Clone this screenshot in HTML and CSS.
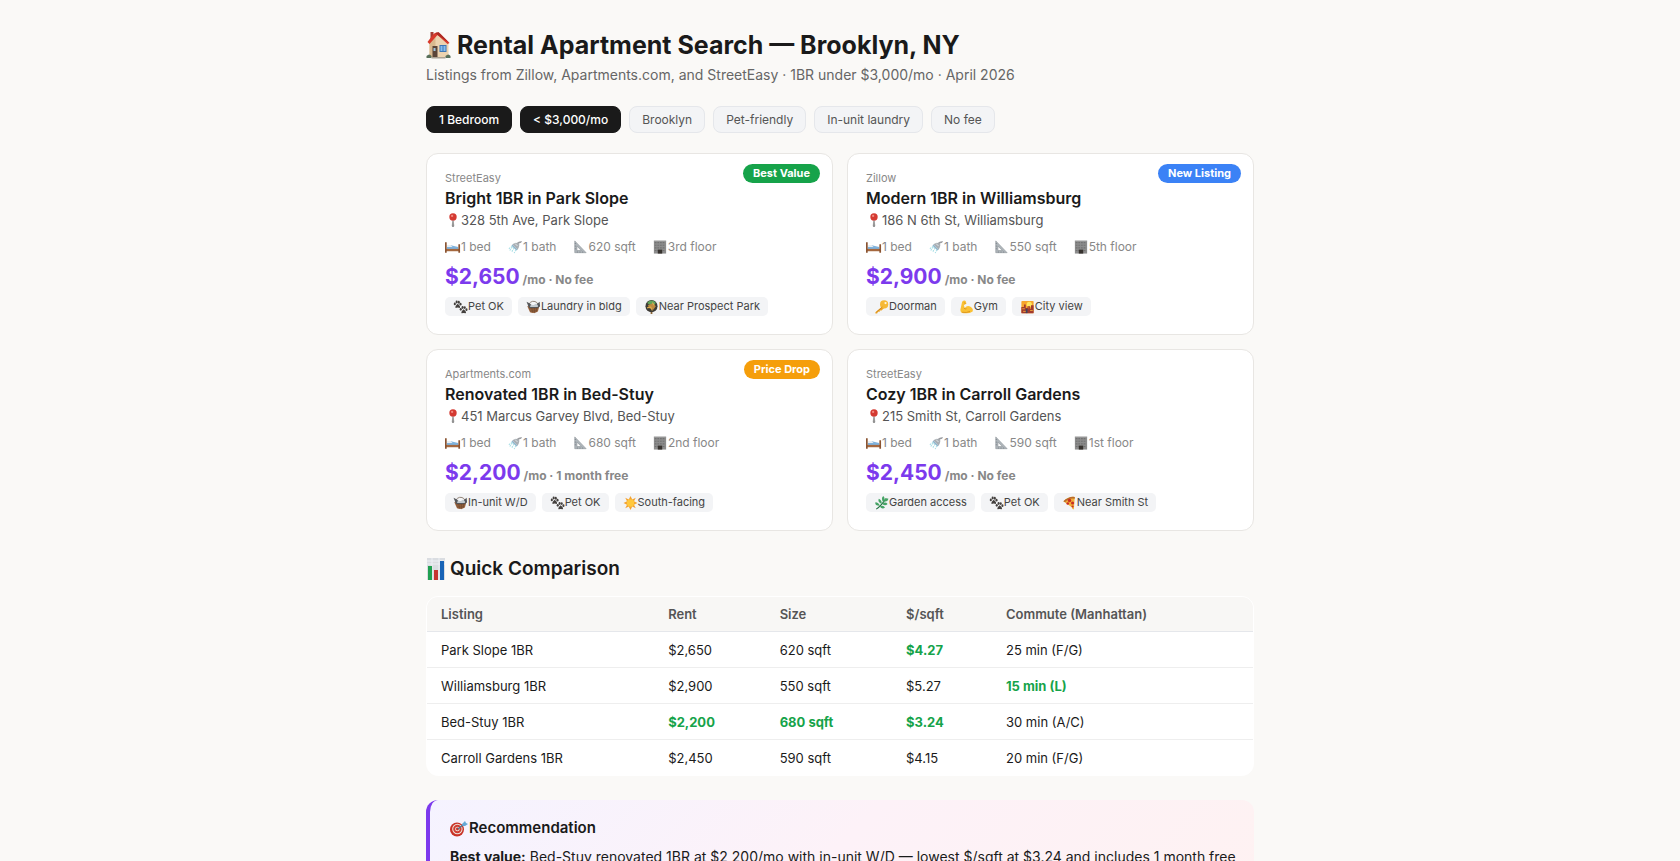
FILE: index.html
```html
<!DOCTYPE html>
<html lang="en">
<head>
  <meta charset="UTF-8" />
  <meta name="viewport" content="width=device-width, initial-scale=1.0"/>
  <title>Rental Apartment Search — Brooklyn, NY</title>
  <link rel="stylesheet" href="styles.css">
</head>
<body>
  <!-- ICONS -->
  <svg class="sprite" aria-hidden="true">
    <symbol id="house" viewBox="0 0 24 28">
      <rect x="4" y="1" width="3" height="8" fill="#a43b32"/>
      <path d="M3 11L12 3L22 12V26H3Z" fill="#ecd3b0"/>
      <path d="M3 11L9 6V26H3Z" fill="#d9b98f"/>
      <path d="M1 11L7 3Q10 0 14 3L23 12L21 13L11 4L3 13Z" fill="#d8392b"/>
      <path d="M9 2L12 1L22 11L23 12L11 4Z" fill="#ad2a23"/>
      <rect x="6" y="15" width="5" height="11" fill="#5b4539"/>
      <rect x="7" y="17" width="2" height="3" fill="#9fc6df"/>
      <rect x="13" y="14" width="7" height="7" fill="#3c76b5"/>
      <path d="M14 15H16V20H14ZM17 15H19V20H17Z" fill="#84bdf0"/>
      <path d="M0 25Q3 22 5 25V27H0ZM19 25Q22 22 24 25V27H19Z" fill="#58705a"/>
      <rect x="5" y="26" width="14" height="1.5" fill="#aaa294"/>
    </symbol>
    <symbol id="pin" viewBox="0 0 16 16">
      <path d="M8 7L9 15L8 16L7 15Z" fill="#858585" stroke="#777" stroke-width=".6"/>
      <circle cx="8" cy="4.5" r="4.2" fill="#d43a32"/>
      <circle cx="7" cy="3.3" r="1.3" fill="#f18a80"/>
    </symbol>
    <symbol id="bed" viewBox="0 0 17 14">
      <path d="M2 6L5 5L14 7V9H2Z" fill="#7fb2dc"/>
      <path d="M2 5H6L8 7H2Z" fill="#e9eef2"/>
      <path d="M1 9H15V11.5H1Z" fill="#a5683f"/>
      <path d="M0 2H1.8V13H0ZM14.2 4H16V13H14.2Z" fill="#8a5432"/>
    </symbol>
    <symbol id="shower" viewBox="0 0 16 16">
      <path d="M9 4Q12 1 16 1L15 3Q12 3 11 6Z" fill="#9a9ca0"/>
      <path d="M5 5Q9 1 13 5Q13 8 11 11Z" fill="#a9afb4"/>
      <path d="M5 5L11 11L9.5 12L4 6.5Z" fill="#8fb3cc"/>
      <path d="M5 8L2 12M7 9L4 14M9 11L7 15M5 7L1 10" stroke="#a9dfe6" stroke-width="1.2" stroke-dasharray="2 1"/>
      <path d="M8 4L11 7" stroke="#e8ecef"/>
    </symbol>
    <symbol id="ruler" viewBox="0 0 16 16">
      <path d="M2 1L15 14.5H2ZM4.5 7V12H9.5Z" fill="#aeb5ba" fill-rule="evenodd" stroke="#8d9499" stroke-width=".7"/>
      <path d="M2 4H3.5M2 7H3.5M2 10H3.5M5 14.5V13M8 14.5V13M11 14.5V13" stroke="#687078" stroke-width=".6"/>
    </symbol>
    <symbol id="building" viewBox="0 0 16 16">
      <rect x="1" y="1" width="14" height="14.5" fill="#8c8c8c"/>
      <path d="M2 3H14M2 6H14M2 9H14M2 12H14" stroke="#727272" stroke-width="1.3" stroke-dasharray="2 1"/>
      <rect x="5.5" y="11" width="5" height="4.5" fill="#37332f"/>
      <path d="M1 1H15" stroke="#aaa"/>
    </symbol>
    <symbol id="paws" viewBox="0 0 16 16">
      <g id="paw" fill="#44403e">
        <ellipse cx="1.5" cy="4.5" rx="1.2" ry="1.6"/>
        <ellipse cx="3.6" cy="2.4" rx="1.2" ry="1.7"/>
        <ellipse cx="6" cy="2.5" rx="1.2" ry="1.7"/>
        <ellipse cx="8" cy="4.8" rx="1.2" ry="1.6"/>
        <path d="M4.8 4.3Q8.4 7 7.2 9Q4.8 8.1 2.4 9Q1.4 7 4.8 4.3Z"/>
      </g>
      <use href="#paw" x="6.8" y="6.2"/>
    </symbol>
    <symbol id="basket" viewBox="0 0 16 16">
      <path d="M2 8Q2 3 7 1.5Q13 1 14 8" fill="none" stroke="#857566" stroke-width="1"/>
      <path d="M1 7L15 6L13 13Q8 16 4 14Z" fill="#9a643e"/>
      <path d="M0 2L4 4L6 6L9 7L15 2L15.5 7L13 9H3Z" fill="#55575b"/>
      <path d="M5 5L8 6L11 4L13 6V8H4Z" fill="#c3cacf"/>
      <path d="M3 10H13M4 12.5H12M6 9L7 14M9 9V15M12 8L11 13" stroke="#6a462f" stroke-width=".7"/>
    </symbol>
    <symbol id="park" viewBox="0 0 16 16">
      <path d="M8 12V16" stroke="#8d6534" stroke-width="2"/>
      <circle cx="8" cy="7" r="6.9" fill="#3e3c37"/>
      <path d="M3 3Q8-2 13 3L11 6Q8 4 5 5Z" fill="#61a35a"/>
      <path d="M4 6Q9 2 13 7L10 11L5 9Z" fill="#bd8b40"/>
      <path d="M3 9L7 8L9 12M9 3L11 6" stroke="#e1ae4c" stroke-width="1.2" fill="none"/>
    </symbol>
    <symbol id="key" viewBox="0 0 16 16">
      <path d="M9 7L1 14V15.5H3L4 13.5H6L6 12H8L11 9" fill="#eda527"/>
      <circle cx="11" cy="5" r="4.7" fill="#f6b936"/>
      <circle cx="12.6" cy="3.5" r="1.3" fill="#fff5dc"/>
      <path d="M2 14L9 8" stroke="#bd7617" stroke-width=".7"/>
    </symbol>
    <symbol id="arm" viewBox="0 0 16 16">
      <path d="M3 2Q5 0 7 1L8 4L5 6L6 9Q9 5 13 8Q16 10 15 13Q11 16 5 15Q1 15 1 11Z" fill="#fac135"/>
      <path d="M5 3L7 4M5 9Q6 11 8 10M3 14Q8 15 12 13" stroke="#d58c1b" stroke-width=".9" fill="none"/>
    </symbol>
    <symbol id="city" viewBox="0 0 16 16">
      <rect x="1" y="1" width="14" height="14" rx="1" fill="#f7a52c"/>
      <circle cx="10" cy="5" r="3" fill="#ffe55e"/>
      <path d="M1 8H4V5H6V9H8V7H11V10H12V6H15V15H1Z" fill="#a33a2e"/>
      <path d="M2 10H5M9 9H10M3 13H7M11 12H14" stroke="#f1aa3d" stroke-width="1"/>
      <path d="M6 10H8V15H6Z" fill="#41445c"/>
    </symbol>
    <symbol id="sun" viewBox="0 0 16 16">
      <path d="M8 0L10 4L14 2L12 6L16 8L12 10L14 14L10 12L8 16L6 12L2 14L4 10L0 8L4 6L2 2L6 4Z" fill="#f3a332"/>
      <circle cx="8" cy="8" r="4.2" fill="#ffc83d"/>
    </symbol>
    <symbol id="herb" viewBox="0 0 16 16">
      <path d="M2 15Q8 11 13 3" stroke="#257443" stroke-width="1.2" fill="none"/>
      <path d="M6 11Q0 11 1 7Q5 7 6 11ZM8 9Q3 6 5 3Q9 5 8 9ZM10 7Q7 3 10 0Q13 3 10 7ZM11 6Q12 1 16 3Q15 7 11 6ZM9 9Q12 6 15 9Q12 12 9 9ZM6 12Q10 10 12 13Q9 16 6 12Z" fill="#46a365"/>
    </symbol>
    <symbol id="pizza" viewBox="0 0 16 16">
      <path d="M1 6Q7 0 14 1L13 15Q11 16 11 13Z" fill="#f1af39"/>
      <path d="M1 6Q7 0 14 1V3Q7 2 3 7Z" fill="#b96b2b"/>
      <g fill="#c92e24"><circle cx="8" cy="5" r="2"/><circle cx="11.5" cy="8" r="1.8"/><circle cx="6" cy="8.5" r="1.5"/><circle cx="11.5" cy="12" r="1.2"/></g>
    </symbol>
    <symbol id="chart" viewBox="0 0 18 22">
      <rect width="18" height="22" fill="#dadde1"/>
      <path d="M0 3H18M0 6H18M5 0V22M12 0V22" stroke="#edf0f5"/>
      <rect x="1" y="8" width="4" height="14" fill="#20a051"/>
      <rect x="7" y="12" width="4" height="10" fill="#c53431"/>
      <rect x="13" y="3" width="4" height="19" fill="#1763b6"/>
    </symbol>
    <symbol id="target" viewBox="0 0 18 17">
      <ellipse cx="7" cy="9.5" rx="7" ry="7" fill="#c93226"/>
      <circle cx="7.4" cy="9" r="5.2" fill="#eee6df"/>
      <circle cx="7.4" cy="9" r="4.2" fill="#d13c31"/>
      <circle cx="7.4" cy="9" r="2.3" fill="#eee6df"/>
      <circle cx="7.4" cy="9" r="1.4" fill="#c93226"/>
      <path d="M8 9L14 4" stroke="#51738e" stroke-width="1.3"/>
      <path d="M12 4L15 1L16 3L18 4L15 6L12.5 6Z" fill="#65a9d6"/>
    </symbol>
  </svg>

  <div class="container">
    <h1><svg class="icon-house"><use href="#house"/></svg>Rental Apartment Search — Brooklyn, NY</h1>
    <p class="subtitle">Listings from Zillow, Apartments.com, and StreetEasy · 1BR under $3,000/mo · April 2026</p>

    <div class="filters">
      <button type="button" class="chip active">1 Bedroom</button>
      <button type="button" class="chip active">&lt; $3,000/mo</button>
      <button type="button" class="chip">Brooklyn</button>
      <button type="button" class="chip">Pet-friendly</button>
      <button type="button" class="chip">In-unit laundry</button>
      <button type="button" class="chip">No fee</button>
    </div>

    <!-- LISTINGS -->
    <div class="grid">
      <div class="card">
        <span class="badge best">Best Value</span>
        <div class="source">StreetEasy</div>
        <h3>Bright 1BR in Park Slope</h3>
        <div class="address"><svg class="icon"><use href="#pin"/></svg>328 5th Ave, Park Slope</div>
        <div class="specs">
          <span><svg class="icon"><use href="#bed"/></svg>1 bed</span>
          <span><svg class="icon"><use href="#shower"/></svg>1 bath</span>
          <span><svg class="icon"><use href="#ruler"/></svg>620 sqft</span>
          <span><svg class="icon"><use href="#building"/></svg>3rd floor</span>
        </div>
        <div class="price">$2,650 <span>/mo · No fee</span></div>
        <div class="tags">
          <span class="tag"><svg class="icon"><use href="#paws"/></svg>Pet OK</span>
          <span class="tag"><svg class="icon"><use href="#basket"/></svg>Laundry in bldg</span>
          <span class="tag"><svg class="icon"><use href="#park"/></svg>Near Prospect Park</span>
        </div>
      </div>

      <div class="card">
        <span class="badge new">New Listing</span>
        <div class="source">Zillow</div>
        <h3>Modern 1BR in Williamsburg</h3>
        <div class="address"><svg class="icon"><use href="#pin"/></svg>186 N 6th St, Williamsburg</div>
        <div class="specs">
          <span><svg class="icon"><use href="#bed"/></svg>1 bed</span>
          <span><svg class="icon"><use href="#shower"/></svg>1 bath</span>
          <span><svg class="icon"><use href="#ruler"/></svg>550 sqft</span>
          <span><svg class="icon"><use href="#building"/></svg>5th floor</span>
        </div>
        <div class="price">$2,900 <span>/mo · No fee</span></div>
        <div class="tags">
          <span class="tag"><svg class="icon"><use href="#key"/></svg>Doorman</span>
          <span class="tag"><svg class="icon"><use href="#arm"/></svg>Gym</span>
          <span class="tag"><svg class="icon"><use href="#city"/></svg>City view</span>
        </div>
      </div>

      <div class="card">
        <span class="badge drop">Price Drop</span>
        <div class="source">Apartments.com</div>
        <h3>Renovated 1BR in Bed-Stuy</h3>
        <div class="address"><svg class="icon"><use href="#pin"/></svg>451 Marcus Garvey Blvd, Bed-Stuy</div>
        <div class="specs">
          <span><svg class="icon"><use href="#bed"/></svg>1 bed</span>
          <span><svg class="icon"><use href="#shower"/></svg>1 bath</span>
          <span><svg class="icon"><use href="#ruler"/></svg>680 sqft</span>
          <span><svg class="icon"><use href="#building"/></svg>2nd floor</span>
        </div>
        <div class="price">$2,200 <span>/mo · 1 month free</span></div>
        <div class="tags">
          <span class="tag"><svg class="icon"><use href="#basket"/></svg>In-unit W/D</span>
          <span class="tag"><svg class="icon"><use href="#paws"/></svg>Pet OK</span>
          <span class="tag"><svg class="icon"><use href="#sun"/></svg>South-facing</span>
        </div>
      </div>

      <div class="card">
        <div class="source">StreetEasy</div>
        <h3>Cozy 1BR in Carroll Gardens</h3>
        <div class="address"><svg class="icon"><use href="#pin"/></svg>215 Smith St, Carroll Gardens</div>
        <div class="specs">
          <span><svg class="icon"><use href="#bed"/></svg>1 bed</span>
          <span><svg class="icon"><use href="#shower"/></svg>1 bath</span>
          <span><svg class="icon"><use href="#ruler"/></svg>590 sqft</span>
          <span><svg class="icon"><use href="#building"/></svg>1st floor</span>
        </div>
        <div class="price">$2,450 <span>/mo · No fee</span></div>
        <div class="tags">
          <span class="tag"><svg class="icon"><use href="#herb"/></svg>Garden access</span>
          <span class="tag"><svg class="icon"><use href="#paws"/></svg>Pet OK</span>
          <span class="tag"><svg class="icon"><use href="#pizza"/></svg>Near Smith St</span>
        </div>
      </div>
    </div>

    <!-- COMPARISON -->
    <h2><svg class="icon-chart"><use href="#chart"/></svg>Quick Comparison</h2>
    <div class="table-wrap">
      <table>
        <thead>
          <tr>
            <th class="col-listing">Listing</th>
            <th class="col-rent">Rent</th>
            <th class="col-size">Size</th>
            <th class="col-rate">$/sqft</th>
            <th>Commute (Manhattan)</th>
          </tr>
        </thead>
        <tbody>
          <tr><td>Park Slope 1BR</td><td>$2,650</td><td>620 sqft</td><td class="win">$4.27</td><td>25 min (F/G)</td></tr>
          <tr><td>Williamsburg 1BR</td><td>$2,900</td><td>550 sqft</td><td>$5.27</td><td class="win">15 min (L)</td></tr>
          <tr><td>Bed-Stuy 1BR</td><td class="win">$2,200</td><td class="win">680 sqft</td><td class="win">$3.24</td><td>30 min (A/C)</td></tr>
          <tr><td>Carroll Gardens 1BR</td><td>$2,450</td><td>590 sqft</td><td>$4.15</td><td>20 min (F/G)</td></tr>
        </tbody>
      </table>
    </div>

    <div class="recommendation">
      <h3><svg class="icon-target"><use href="#target"/></svg>Recommendation</h3>
      <p><strong>Best value:</strong> Bed-Stuy renovated 1BR at $2,200/mo with in-unit W/D — lowest $/sqft at $3.24 and includes 1 month free</p>
    </div>
  </div>
</body>
</html>
```
FILE: styles.css
```css
* {
  box-sizing: border-box;
  margin: 0;
  padding: 0;
}

body {
  font-family: Inter, 'Liberation Sans', sans-serif;
  background: #faf9f7;
  color: #1a1a1a;
  padding: 28px 24px;
}

.sprite {
  position: absolute;
  width: 0;
  height: 0;
}

.container {
  max-width: 828px;
  margin: 0 auto;
}

h1 {
  display: flex;
  align-items: center;
  gap: 6px;
  font-size: 25px;
  line-height: 34px;
  font-weight: 700;
}

.icon-house {
  width: 25px;
  height: 28px;
}

.subtitle {
  margin-top: 4px;
  font-size: 14px;
  line-height: 18px;
  color: #666;
}

.filters {
  display: flex;
  flex-wrap: wrap;
  gap: 8px;
  margin: 22px 0 20px;
}

.chip {
  font-family: inherit;
  font-size: 12px;
  line-height: 15px;
  font-weight: 400;
  padding: 5px 12px;
  border: 1px solid #e5e7eb;
  border-radius: 8px;
  background: #f3f4f6;
  color: #555;
  cursor: pointer;
}

.chip.active {
  background: #1a1a1a;
  border-color: #1a1a1a;
  color: #fff;
  font-weight: 500;
}

.grid {
  display: grid;
  grid-template-columns: 1fr 1fr;
  gap: 14px;
}

.card {
  position: relative;
  background: #fff;
  border: 1px solid #e8e6e3;
  border-radius: 12px;
  padding: 18px;
}

.badge {
  position: absolute;
  top: 10px;
  right: 12px;
  padding: 2px 10px;
  border-radius: 10px;
  font-size: 11px;
  line-height: 15px;
  font-weight: 700;
  color: #fff;
}

.badge.best {
  background: #16a34a;
}

.badge.new {
  background: #3b82f6;
}

.badge.drop {
  background: #f59e0b;
}

.source {
  font-size: 11px;
  line-height: 13px;
  color: #888;
}

.card h3 {
  margin-top: 3px;
  font-size: 16px;
  line-height: 20px;
  font-weight: 600;
}

.icon {
  flex: none;
  width: 16px;
  height: 14px;
}

.address {
  display: flex;
  align-items: center;
  margin-top: 4px;
  font-size: 13px;
  line-height: 16px;
  color: #555;
}

.specs {
  display: flex;
  gap: 16px;
  margin-top: 11px;
  font-size: 12px;
  line-height: 16px;
  color: #888;
}

.specs span {
  display: flex;
  align-items: center;
}

.price {
  margin-top: 8px;
  font-size: 21px;
  line-height: 28px;
  font-weight: 700;
  color: #7c3aed;
}

.price span {
  margin-left: -2px;
  font-size: 12px;
  color: #888;
}

.tags {
  display: flex;
  flex-wrap: wrap;
  gap: 6px;
  margin-top: 3px;
}

.tag {
  display: flex;
  align-items: center;
  padding: 2px 8px;
  border-radius: 5px;
  background: #f3f4f6;
  font-size: 11px;
  line-height: 15px;
  color: #444;
}

.tag .icon {
  width: 15px;
}

h2 {
  display: flex;
  align-items: center;
  gap: 4px;
  margin: 25px 0 14px;
  font-size: 19px;
  line-height: 26px;
  font-weight: 600;
}

.icon-chart {
  width: 20px;
  height: 22px;
}

.table-wrap {
  background: #fff;
  border: 1px solid #fff;
  border-radius: 12px;
  overflow: hidden;
}

table {
  width: 100%;
  border-collapse: collapse;
  font-size: 13px;
  line-height: 16px;
}

th {
  padding: 9px 14px;
  text-align: left;
  font-weight: 600;
  color: #555;
  background: #f8f7f5;
  border-bottom: 1px solid #e5e7eb;
}

td {
  padding: 10px 14px 9px;
  border-bottom: 1px solid #eee;
}

tr:last-child td {
  border-bottom: none;
}

.col-listing {
  width: 27.5%;
}

.col-rent {
  width: 13.5%;
}

.col-size {
  width: 15.3%;
}

.col-rate {
  width: 12.1%;
}

.win {
  font-weight: 700;
  color: #16a34a;
}

.recommendation {
  margin-top: 24px;
  padding: 18px 12px 18px 20px;
  border-left: 4px solid #7c3aed;
  border-radius: 12px;
  background: linear-gradient(135deg, #f5f3ff, #fdf2f8, #fef2f2);
}

.recommendation h3 {
  display: flex;
  align-items: center;
  gap: 1px;
  font-size: 15px;
  line-height: 20px;
  font-weight: 600;
}

.icon-target {
  width: 18px;
  height: 17px;
}

.recommendation p {
  margin-top: 8px;
  font-size: 14px;
  line-height: 22px;
}
```
